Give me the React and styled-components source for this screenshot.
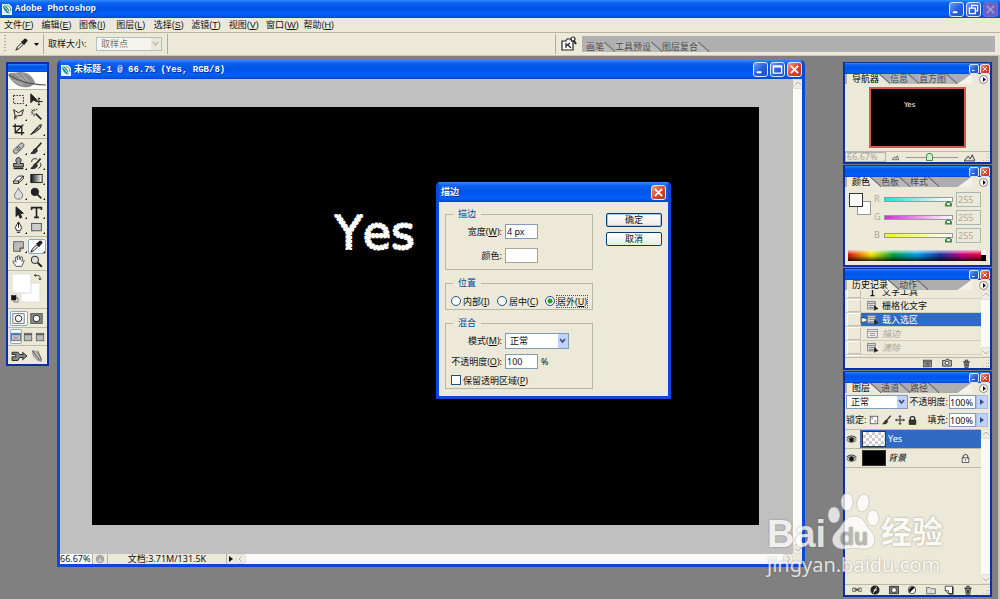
import React from "react";
import styled, { createGlobalStyle, css } from "styled-components";

const FACE = "#ece9d8";
const UI = '"Noto Sans", "Noto Sans CJK SC", sans-serif';
const MENU = '"Liberation Sans", "Noto Sans CJK SC", sans-serif';
const MONO = '"Liberation Mono", "Noto Sans CJK SC", monospace';

const Global = createGlobalStyle`
  *, *::before, *::after { box-sizing: border-box; }
  body { margin: 0; background: #808080; color: #111; font: 9px/12px ${UI}; }
  button, input, select { font: inherit; color: inherit; margin: 0; padding: 0; }
  fieldset { margin: 0; padding: 0; min-width: 0; }
  svg { display: block; flex: none; }
`;

const Page = styled.div`
  min-height: 100vh;
  display: flex;
  flex-direction: column;
`;

/* ---------- shared window chrome ---------- */

const blueBar = css`
  background: linear-gradient(#2f8dff 0, #0a62f0 18%, #0054e6 45%, #0060fc 80%, #0047cf 100%);
  color: #fff;
`;

const AppTitle = styled.header`
  ${blueBar}
  height: 18px;
  flex: none;
  display: flex;
  align-items: center;
  gap: 3px;
  padding: 0 2px;
  font-family: ${MONO};
  font-weight: 700;
`;

const Title = styled.h1`
  flex: 1;
  margin: 0;
  font: inherit;
  white-space: nowrap;
  text-shadow: 1px 1px 0 #0a2f8c;
`;

const Buttons = styled.div`
  display: flex;
  gap: ${(p) => (p.$small ? 1 : 2)}px;
`;

const Caption = styled.button`
  width: ${(p) => p.$size}px;
  height: ${(p) => p.$size}px;
  padding: 0;
  border: 1px solid #dbe6ff;
  border-radius: ${(p) => (p.$size > 12 ? 3 : 2)}px;
  display: grid;
  place-items: center;
  color: #fff;
  background: ${(p) => (p.$close ? "linear-gradient(135deg,#f0a080,#d9492a 50%,#b8361a)" : "linear-gradient(135deg,#6f9cf8,#2c62dc 50%,#1e4fc8)")};
  &:disabled {
    border-color: #6a6fd8;
    color: #a698d8;
    background: #6a5fc4;
  }
`;

const glyphs = {
  min: <path d="M2 9h5" strokeWidth="2" />,
  max: <path d="M1.500 2h9v8h-9zM1.500 3h9" strokeWidth="1.500" />,
  restore: <path d="M4 4V1.500h6.500v6H8M1.500 4.500h6.500v6H1.500z" strokeWidth="1.400" />,
  close: <path d="M2 2l8 8M10 2l-8 8" strokeWidth="1.800" />,
};
function CaptionButton({ kind, size, label, disabled }) {
  return (
    <Caption type="button" $size={size} $close={kind === "close"} aria-label={label} disabled={disabled}>
      <svg width={size - 4} height={size - 4} viewBox="0 0 12 12" fill="none" stroke="currentColor">{glyphs[kind]}</svg>
    </Caption>
  );
}

function PsLogo() {
  return (
    <svg width="10" height="12" viewBox="0 0 10 12">
      <path d="M0 1h7l3 3v8H0z" fill="#e9f4f4" />
      <path d="M1 2c3 0 6 3 7 9C4 10 1 7 1 2z" fill="#1a8a8c" />
      <path d="M1 2c3 3 5 6 7 9" stroke="#d8f2ee" fill="none" />
      <path d="M5 2c2 1 4 3 4 6" stroke="#4b9d50" fill="none" />
    </svg>
  );
}

/* ---------- icons ---------- */

const icons = {
  marquee: <path d="M2 3h12v10H2z" strokeDasharray="2 1.500" />,
  move: <><path d="M1 1v11l3-3h5z" fill="#222" /><path d="M11 6v9M6.500 10.500h9M9.500 7.500L11 6l1.500 1.500M9.500 13.500L11 15l1.500-1.500" /></>,
  lasso: <path d="M3 14l1-4-2-8 6 4 6-4-2 7-8 1c-2 1 0 3 2 2" />,
  wand: <><path d="M7 7l7 7" strokeWidth="2" /><path d="M5 1v3M5 7v3M1 5h3M7 3l2-2M2 2l1.500 1.500M2 8l1.500-1.500" /></>,
  crop: <path d="M4 1v11h11M1 4h11v11M4 12L14 2" strokeWidth="1.600" />,
  slice: <><path d="M1 14L11 3l3-1-1 4-6 5z" fill="#999" /><path d="M1 14l9-8" /></>,
  heal: <><path d="M2 11l8-8c3-2 6 1 4 4l-8 8c-3 1-5-1-4-4z" fill="#bbb" stroke="#555" transform="translate(0 -1)" /><path d="M6 6l4 4M8 5l3 3M5 8l3 3" stroke="#555" /></>,
  brush: <><path d="M14 1L7 9" strokeWidth="2" /><path d="M7 8c-3 0-2 4-6 6 4 1 8-1 8-4z" fill="#333" /></>,
  stamp: <><path d="M6 8c0-2-2-3-1-5 1-3 5-3 6 0 1 2-1 3-1 5h4v4H2V8z" fill="#999" /><path d="M2 14h12" strokeWidth="2" /></>,
  history: <><path d="M13 2L7 9" strokeWidth="2" /><path d="M7 8c-3 0-2 4-6 6 4 1 8-1 8-4z" fill="#333" /><path d="M2 6c0-4 5-5 7-3M12 7c3 2 1 6-2 7" /></>,
  eraser: <><path d="M2 11l6-6h6l-6 6z" fill="#fff" /><path d="M2 11v3h6v-3M8 14l6-6V5" /></>,
  gradient: <rect x="1" y="3" width="14" height="10" fill="url(#toolGradient)" />,
  blur: <path d="M8 1c1 4 5 6 5 9a5 5 0 01-10 0c0-3 4-5 5-9z" fill="#ddd" stroke="#777" />,
  burn: <><circle cx="6" cy="6" r="4.500" fill="#222" /><path d="M9 9l5 5" strokeWidth="2" /></>,
  arrow: <path d="M5 1v12l3-3 2 5 2-1-2-5h4z" fill="#222" />,
  type: <path d="M2 5V2h12v3M8 2v12M5 14h6" strokeWidth="2" />,
  pen: <><path d="M8 1l4 7-2 4H6L4 8zM6 14h4" fill="#fff" /><path d="M8 2v6" /></>,
  shape: <rect x="2" y="3" width="12" height="9" fill="#ccc" stroke="#555" />,
  notes: <><path d="M2 2h12v8l-4 4H2z" fill="#bbb" stroke="#666" /><path d="M14 10h-4v4" fill="#fff" /></>,
  dropper: <><path d="M1 15l2-4 5-5 2 2-5 5z" fill="#eee" /><path d="M8 4l4 4M9 5l3-3c1-1 3 1 2 2l-3 3z" fill="#222" strokeWidth="2" /></>,
  hand: <path d="M5 14L1 8l2-1 2 2-1-6 2-1 1 4V1h2l1 5 1-4 2 1-1 5 2-2 1 1-3 7z" fill="#fff" stroke="#555" />,
  zoom: <><circle cx="6" cy="6" r="4.500" fill="#ddd" /><path d="M9.500 9.500l5 5" strokeWidth="2.400" /></>,
  swap: <path d="M3 2L1 5l3 2M1 5h8c3 0 3 3 3 8M9 11l3 3 3-3" strokeWidth="1.600" />,
  mini: <><rect x="6" y="6" width="8" height="8" fill="#fff" /><rect x="1" y="1" width="9" height="9" fill="#111" /></>,
  standard: <><rect x="1" y="2" width="14" height="12" fill="#fff" stroke="#777" /><circle cx="8" cy="8" r="4" fill="#fff" /></>,
  quick: <><rect x="1" y="2" width="14" height="12" fill="#888" stroke="#555" /><circle cx="8" cy="8" r="4" fill="#fff" /></>,
  screen: <><rect x="1" y="2" width="14" height="12" fill="#b9cbe0" stroke="#456" /><path d="M2 4h12" stroke="#356ac0" strokeWidth="2" /><path d="M4 12l8-5M4 7l8 5" stroke="#c66" /></>,
  full: <><rect x="2" y="2" width="12" height="12" fill="#bbb" stroke="#555" /><path d="M2 4h12" strokeWidth="2" stroke="#555" /></>,
  jump: <path d="M1 3h8l2 3h5l-1-3 6 5-6 5 1-3h-5l-2 4H1V9h5V6H1z" fill="#888" />,
  ready: <><path d="M2 1c6 0 10 5 12 14C7 14 2 9 2 1z" fill="#bbb" stroke="#888" /><path d="M2 1l10 13M9 1l5 12" stroke="#555" /></>,
  browse: <><path d="M1 5h4l1-2h4l1 2h1v9H1z" fill="#fff" /><path d="M5 7v5M5 10l4-3M7 9l3 3" /><circle cx="12" cy="3" r="2" fill="#fff" /><path d="M13 5l2 3" strokeWidth="2" /></>,
  doc: <><rect x="1" y="2" width="11" height="11" fill="#ddd" stroke="#777" /><path d="M1 5h11M3 8h7M3 11h7" stroke="#777" /><path d="M11 8v7l2-2h3z" fill="#222" /></>,
  dialog: <><rect x="1" y="2" width="14" height="12" fill="#eee" stroke="#888" /><path d="M1 5h14M4 8h8M4 11h8" stroke="#888" /></>,
  newDoc: <><rect x="1" y="2" width="14" height="12" fill="#999" stroke="#333" /><path d="M1 5h14M4 8h8M4 11h8" stroke="#333" /></>,
  snapshot: <><path d="M1 4h4l2-2h4l1 2h3v9H1z" fill="#bbb" /><circle cx="8" cy="8" r="3" fill="#fff" /></>,
  trash: <><path d="M4 6h8l-1 9H5z" fill="#aaa" /><path d="M2 5h12M6 4V2h4v2M7 8v5M9 8v5" strokeWidth="1.600" /></>,
  link: <><rect x="0" y="5" width="7" height="5" rx="2" /><rect x="9" y="5" width="7" height="5" rx="2" /><path d="M4 7.500h8" /></>,
  fx: <><circle cx="8" cy="8" r="6.500" fill="#222" /><path d="M5 12c3 0 3-8 6-8M6 8h5" stroke="#fff" strokeWidth="1.600" /></>,
  mask: <><rect x="1" y="2" width="14" height="12" fill="#777" /><circle cx="8" cy="8" r="4" fill="#fff" /></>,
  adjust: <><circle cx="8" cy="8" r="6" fill="#fff" /><path d="M12 4A6 6 0 004 12z" fill="#111" /></>,
  folder: <path d="M1 4h5l2 2h7v8H1z" fill="#ddd" stroke="#555" />,
  page: <><path d="M2 2h12v12H7l-5-5z" fill="#fff" /><path d="M7 14V9H2" /><path d="M14 3v11H8" strokeWidth="2" /></>,
  pixels: <><rect x="2" y="2" width="12" height="12" fill="#fff" stroke="#444" /><path d="M3 3h4v4H3zM8 8h4v4H8z" fill="#bbb" stroke="none" /></>,
  cross: <path d="M8 1v14M1 8h14M6 3l2-2 2 2M6 13l2 2 2-2M3 6L1 8l2 2M13 6l2 2-2 2" strokeWidth="1.500" />,
  lock: <><rect x="2" y="7" width="12" height="8" fill="#333" /><path d="M4 7V4c0-4 8-4 8 0v3" strokeWidth="2" /></>,
  lockOpen: <><rect x="2" y="7" width="12" height="8" fill="#eee" /><path d="M4 7V4c0-4 8-4 8 0v3M8 10v2" strokeWidth="1.600" /></>,
  eye: <><path d="M1 9c4-5 10-5 14 0-4 4-10 4-14 0z" fill="#ccc" stroke="#555" /><circle cx="8" cy="8.500" r="3" fill="#111" /><path d="M1 6c4-4 10-4 14 0" stroke="#444" strokeWidth="1.600" /></>,
  pointer: <path d="M1 4h6c4 0 7 2 7 4s-3 4-7 4H1l3-4z" fill="#fff" />,
  clock: <><circle cx="8" cy="8" r="6" fill="#ccc" stroke="#888" /><path d="M5 5h6v5M5 5v6" stroke="#777" /></>,
  hills: <path d="M0 13L6 6l3 4 3-6 4 9z" fill="#ddd" />,
};
function Icon({ name, size = 12, width }) {
  return (
    <svg width={width || size} height={size} viewBox={width ? "0 0 22 16" : "0 0 16 16"} fill="none" stroke="#222" strokeWidth="1.200">
      {icons[name]}
    </svg>
  );
}

/* ---------- menu and options ---------- */

const MenuBar = styled.nav`
  height: 14px;
  flex: none;
  background: ${FACE};
  padding-left: 4px;
`;
const MenuItems = styled.div`
  width: 337px;
  display: grid;
  grid-template-columns: repeat(9, 1fr);
`;
const MenuItem = styled.button`
  border: 0;
  background: none;
  text-align: left;
  white-space: nowrap;
  font: 9px/14px ${MENU};
`;

const OptionsBar = styled.div`
  height: 24px;
  flex: none;
  display: flex;
  align-items: center;
  background: ${FACE};
  border-top: 1px solid #b8b5a5;
  border-bottom: 1px solid #c9c6b6;
  padding: 0 5px 0 4px;
`;
const Gripper = styled.span`
  width: 2px;
  height: 18px;
  background: repeating-linear-gradient(#aaa 0 1px, transparent 1px 3px);
`;
const Divider = styled.span`
  width: 1px;
  align-self: stretch;
  margin: 1px 0;
  background: #b0ad9d;
`;
const ToolPick = styled.button`
  border: 0;
  background: none;
  width: 37px;
  display: flex;
  align-items: center;
  justify-content: center;
  gap: 6px;
  padding-left: 5px;
`;
const SampleLabel = styled.label`
  width: 52px;
  padding-left: 4px;
  white-space: nowrap;
`;
const SampleEnd = styled.span`
  flex: 1;
  align-self: stretch;
  margin: 1px 0 1px 5px;
  border-left: 1px solid #b0ad9d;
`;
const Well = styled.div`
  width: 413px;
  height: 16px;
  display: flex;
  align-items: flex-end;
  background: #b0b0b0;
  padding-left: 4px;
`;
const BrowseButton = styled.button`
  border: 0;
  background: none;
  width: 26px;
  display: grid;
  place-items: center;
`;

/* ---------- form controls ---------- */

const SelectBox = styled.span`
  position: relative;
  display: flex;
  width: ${(p) => p.$w}px;
  height: ${(p) => p.$h}px;
  opacity: ${(p) => (p.$off ? 0.55 : 1)};
  select {
    flex: 1;
    min-width: 0;
    appearance: none;
    border: 1px solid #7f9db9;
    border-radius: 0;
    background: #fff;
    padding-left: 4px;
    opacity: 1;
  }
  &::after {
    content: "";
    position: absolute;
    right: 1px;
    top: 1px;
    bottom: 1px;
    width: 10px;
    pointer-events: none;
    background: ${(p) => (p.$off ? "#e8e6dc" : "#c1d2fa")};
  }
  svg {
    position: absolute;
    z-index: 1;
    right: 3px;
    top: calc(50% - 3px);
    pointer-events: none;
  }
`;
function Select({ id, value, w, h, disabled, label }) {
  return (
    <SelectBox $w={w} $h={h} $off={disabled}>
      <select id={id} aria-label={label} disabled={disabled} defaultValue={value}>
        <option>{value}</option>
      </select>
      <svg width="7" height="6" viewBox="0 0 7 6" fill="none" stroke={disabled ? "#999" : "#2f4c8c"} strokeWidth="1.600"><path d="M1 1l2.500 3L6 1" /></svg>
    </SelectBox>
  );
}
const TextBox = styled.input`
  width: ${(p) => p.$w}px;
  height: ${(p) => p.$h || 15}px;
  border: 1px solid #7f9db9;
  background: ${(p) => (p.$flat ? FACE : "#fff")};
  padding-left: ${(p) => (p.$tight ? 0 : 1)}px;
  &:disabled { color: #aca899; border-color: #a9b6b4; }
`;

/* ---------- workspace ---------- */

const Workspace = styled.main`
  position: relative;
  flex: 1;
  display: flex;
  align-items: flex-start;
  background: #808080;
  border-right: 2px solid #c9c7bd;
  padding: 4px 6px 2px 6px;
`;

const Toolbox = styled.aside`
  width: 43px;
  flex: none;
  margin-top: 2px;
  background: ${FACE};
  border: 2px solid #0a2fa8;
`;
const ToolTitle = styled.div`
  ${blueBar}
  height: 8px;
`;
const Feather = styled.div`
  height: 17px;
  background: #fff;
`;
const ToolGroup = styled.div`
  display: grid;
  grid-template-columns: 18px 18px;
  justify-content: center;
  padding: 2px 0 1px;
  border-top: 1px solid #bdb9a8;
`;
const Tool = styled.button`
  position: relative;
  height: 15px;
  border: 1px solid ${(p) => (p.$on ? "#8aa9c4" : "transparent")};
  border-radius: 2px;
  background: ${(p) => (p.$on ? "#fff" : "none")};
  display: grid;
  place-items: center;
  &::after {
    content: "";
    display: ${(p) => (p.$more ? "block" : "none")};
    position: absolute;
    right: 0;
    bottom: 0;
    border: 1px solid #111;
    border-left-color: transparent;
    border-top-color: transparent;
  }
`;
const Swatches = styled.div`
  height: 38px;
  padding: 2px 3px;
  border-top: 1px solid #bdb9a8;
`;
const ScreenGroup = styled.div`
  display: grid;
  grid-template-columns: repeat(3, 12px);
  justify-content: center;
  padding: 1px 0;
  border-top: 1px solid #bdb9a8;
`;

const groups = [
  ["marquee+", "move", "lasso+", "wand", "crop", "slice+"],
  ["heal+", "brush+", "stamp+", "history+", "eraser+", "gradient+", "blur+", "burn+"],
  ["arrow+", "type+", "pen+", "shape+"],
  ["notes+", "dropper+", "hand", "zoom"],
];

function Tools() {
  return (
    <Toolbox aria-label="工具">
      <ToolTitle />
      <Feather>
        <svg width="39" height="17" viewBox="0 0 39 17">
          <defs><linearGradient id="toolGradient"><stop stopColor="#111" /><stop offset="1" stopColor="#fff" /></linearGradient></defs>
          <path d="M0 2c4-2 8-1 12-2 8 0 12 4 15 10-1 4-6 6-12 5C8 14 2 8 0 2z" fill="#8f8f8f" />
          <path d="M3 4l12 7M7 1l12 10M13 1l9 10M5 8l10 5" stroke="#c8c8c8" strokeWidth=".8" />
          <path d="M1 3c9 6 18 9 37 10" stroke="#555" strokeWidth="1.200" fill="none" />
        </svg>
      </Feather>
      {groups.map((g) => (
        <ToolGroup key={g[0]}>
          {g.map((t) => {
            const name = t.replace("+", "");
            return <Tool key={t} $more={t.endsWith("+")} $on={name === "dropper"} aria-label={name}><Icon name={name} size={13} /></Tool>;
          })}
        </ToolGroup>
      ))}
      <Swatches>
        <svg width="33" height="34" viewBox="0 0 33 34">
          <rect x="10" y="10" width="19" height="19" fill="#fff" stroke="#ddd" />
          <rect x="1" y="1" width="19" height="19" fill="#fff" stroke="#ddd" />
          <g fill="none" stroke="#222" strokeWidth="1.200">
            <g transform="translate(23 0) scale(.5)">{icons.swap}</g>
            <g transform="translate(0 22) scale(.5)">{icons.mini}</g>
          </g>
        </svg>
      </Swatches>
      <ToolGroup>
        <Tool $on aria-label="standard mode"><Icon name="standard" size={13} /></Tool>
        <Tool aria-label="quick mask"><Icon name="quick" size={13} /></Tool>
      </ToolGroup>
      <ScreenGroup>
        <Tool $on aria-label="standard screen"><Icon name="screen" size={10} /></Tool>
        <Tool aria-label="full screen with menu"><Icon name="full" size={10} /></Tool>
        <Tool aria-label="full screen"><Icon name="full" size={10} /></Tool>
      </ScreenGroup>
      <ToolGroup>
        <Tool aria-label="jump"><Icon name="jump" size={12} width={17} /></Tool>
        <Tool aria-label="ready"><Icon name="ready" /></Tool>
      </ToolGroup>
    </Toolbox>
  );
}

/* ---------- document window ---------- */

const DocWindow = styled.section`
  flex: 1;
  align-self: stretch;
  min-width: 0;
  display: flex;
  flex-direction: column;
  margin: 0 38px 30px 8px;
  border: 3px solid #0a48dc;
  border-top: 0;
  border-radius: 5px 5px 0 0;
  overflow: hidden;
`;
const DocTitle = styled.div`
  ${blueBar}
  height: 19px;
  display: flex;
  align-items: center;
  gap: 3px;
  padding-left: 1px;
  font-family: ${MONO};
  font-weight: 700;
`;
const DocBody = styled.div`
  flex: 1;
  display: flex;
`;
const Mat = styled.div`
  flex: 1;
  background: #c0c0c0;
  padding: 28px 34px 29px 32px;
`;
const Canvas = styled.div`
  background: #000;
  height: 100%;
  svg { width: 100%; height: 100%; }
`;
const Letters = styled.text`
  font: 46px "DejaVu Sans", sans-serif;
  font-kerning: none;
  fill: #fff;
  stroke: #fff;
  stroke-width: 2px;
  stroke-dasharray: 3 1;
`;
const VScroll = styled.div`
  width: 9px;
  flex: none;
  display: flex;
  flex-direction: column;
  justify-content: space-between;
  background: #fbfaf6;
`;
const HScroll = styled.div`
  flex: 1;
  display: flex;
  justify-content: space-between;
  background: #fbfaf6;
`;
const ScrollButton = styled.button`
  width: 10px;
  height: 10px;
  border: 1px solid #e0ddd0;
  border-radius: 2px;
  background: #f0eee4;
  display: grid;
  place-items: center;
  svg { transform: rotate(${(p) => p.$turn}deg); }
`;
const Scroll = ({ turn, label }) => (
  <ScrollButton $turn={turn} aria-label={label}>
    <svg width="6" height="6" viewBox="0 0 6 6" fill="none" stroke="#b5b2a4"><path d="M0 4l3-3 3 3" /></svg>
  </ScrollButton>
);
const Status = styled.footer`
  height: 10px;
  display: flex;
  align-items: center;
  background: ${FACE};
  line-height: 10px;
`;
const Percent = styled.input`
  width: 32px;
  height: 10px;
  border: 0;
  background: #fff;
`;
const StatusIcon = styled.span`
  width: 16px;
  display: grid;
  place-items: center;
  border-right: 1px solid #b5b2a4;
  border-left: 1px solid #b5b2a4;
`;
const Size = styled.span`
  width: 118px;
  text-align: center;
  white-space: nowrap;
`;
const More = styled.button`
  width: 10px;
  height: 10px;
  border: 0;
  border-left: 1px solid #b5b2a4;
  background: none;
  display: grid;
  place-items: center;
`;
const Corner = styled.span`
  width: 9px;
`;
const RightTriangle = ({ color = "#111" }) => <svg width="5" height="6" viewBox="0 0 5 6"><path d="M0 0l4 3-4 3z" fill={color} /></svg>;

function DocumentWindow() {
  return (
    <DocWindow>
      <DocTitle>
        <PsLogo />
        <Title as="h2">未标题-1 @ 66.7% (Yes, RGB/8)</Title>
        <Buttons>
          <CaptionButton kind="min" size={15} label="最小化" />
          <CaptionButton kind="max" size={15} label="最大化" />
          <CaptionButton kind="close" size={15} label="关闭" />
        </Buttons>
      </DocTitle>
      <DocBody>
        <Mat>
          <Canvas>
            <svg viewBox="0 0 668 418">
              <Letters x="243" y="142">Yes</Letters>
            </svg>
          </Canvas>
        </Mat>
        <VScroll><Scroll turn={0} label="向上" /><Scroll turn={180} label="向下" /></VScroll>
      </DocBody>
      <Status>
        <Percent defaultValue="66.67%" aria-label="缩放" />
        <StatusIcon><Icon name="clock" size={10} /></StatusIcon>
        <Size>文档:3.71M/131.5K</Size>
        <More aria-label="更多"><RightTriangle /></More>
        <HScroll><Scroll turn={270} label="向左" /><Scroll turn={90} label="向右" /></HScroll>
        <Corner />
      </Status>
    </DocWindow>
  );
}

/* ---------- palettes ---------- */

const Palettes = styled.aside`
  width: 149px;
  flex: none;
  align-self: stretch;
  margin-top: 2px;
  display: flex;
  flex-direction: column;
  gap: 1px;
`;
const PaletteFrame = styled.section`
  display: flex;
  flex-direction: column;
  flex: ${(p) => (p.$grow ? "1" : "none")};
  height: ${(p) => (p.$grow ? "auto" : "102px")};
  background: ${FACE};
  border: 2px solid #0a2fa8;
  border-top-width: 1px;
`;
const PaletteTitle = styled.div`
  ${blueBar}
  height: 11px;
  flex: none;
  display: flex;
  justify-content: flex-end;
  align-items: center;
`;
const Tabs = styled.div`
  height: 10px;
  flex: none;
  display: flex;
  background: #adadad;
  padding-left: 2px;
`;
const Tab = styled.button`
  display: flex;
  height: 10px;
  border: 0;
  padding: 0 0 0 ${(p) => (p.$on ? 5 : 0)}px;
  line-height: 10px;
  white-space: nowrap;
  color: ${(p) => (p.$on ? "#000" : "#4a4a4a")};
  background: linear-gradient(${(p) => (p.$on ? FACE : "#b9b9b9")} 0 0) left / calc(100% - 11px) 100% no-repeat;
  &::after {
    content: "";
    width: 11px;
    height: 10px;
    background: linear-gradient(to top right, ${(p) => (p.$on ? FACE : "#b9b9b9")} 46%, #666 50%, transparent 60%);
  }
`;
const TabEnd = styled.div`
  width: 32px;
  margin-left: auto;
  display: flex;
  justify-content: flex-end;
  align-items: center;
  padding-right: 2px;
  background: linear-gradient(to bottom right, transparent 46%, #f4f2e6 50%) left / 14px 100% no-repeat,
    linear-gradient(${FACE} 0 0) right / 18px 100% no-repeat;
`;
const RoundMenu = styled.button`
  width: 9px;
  height: 9px;
  border: 1px solid #888;
  border-radius: 50%;
  background: #fff;
  display: grid;
  place-items: center;
`;

function Palette({ tabs, grow, children }) {
  return (
    <PaletteFrame $grow={grow}>
      <PaletteTitle>
        <Buttons $small>
          <CaptionButton kind="min" size={10} label="最小化" />
          <CaptionButton kind="close" size={10} label="关闭" />
        </Buttons>
      </PaletteTitle>
      <Tabs>
        {tabs.map((t, i) => <Tab key={t} $on={i === 0}>{t}</Tab>)}
        <TabEnd><RoundMenu aria-label="菜单"><svg width="4" height="5" viewBox="0 0 4 5"><path d="M1 0l3 2.500L1 5z" fill="#111" /></svg></RoundMenu></TabEnd>
      </Tabs>
      {children}
    </PaletteFrame>
  );
}

const PaletteFooter = styled.div`
  height: 11px;
  flex: none;
  display: flex;
  align-items: center;
  justify-content: ${(p) => (p.$spread ? "space-between" : "flex-end")};
  gap: ${(p) => (p.$spread ? 0 : 10)}px;
  padding-left: ${(p) => p.$pad || 0}px;
  border-top: 1px solid #bdb9a8;
`;
const FlatButton = styled.button`
  border: 0;
  background: none;
  display: grid;
  place-items: center;
`;
const Grip = () => (
  <svg width="9" height="9" viewBox="0 0 9 9" fill="#bdb9a8"><path d="M7 1h1v1H7zM5 4h1v1H5zM7 4h1v1H7zM2 7h1v1H2zM5 7h1v1H5zM7 7h1v1H7z" /></svg>
);

const NavView = styled.div`
  flex: 1;
  display: grid;
  place-items: center;
`;
const NavThumb = styled.div`
  width: 97px;
  height: 61px;
  border: 2px solid #d45a50;
  background: #000;
  color: #fff;
  padding: 10px 0 0 33px;
  font: 7px/12px "DejaVu Sans", sans-serif;
`;
const range = css`
  appearance: none;
  margin: 0;
  min-width: 0;
  height: 12px;
  background: none;
`;
const ZoomRange = styled.input`
  ${range}
  width: 52px;
  &::-webkit-slider-runnable-track { height: 1px; background: #999; }
  &::-webkit-slider-thumb {
    appearance: none;
    width: 7px;
    height: 8px;
    margin-top: -4px;
    background: #d6ecd0;
    border: 1px solid #4a8c52;
    border-radius: 3px 3px 0 0;
  }
`;

function Navigator() {
  return (
    <Palette tabs={["导航器", "信息", "直方图"]}>
      <NavView><NavThumb>Yes</NavThumb></NavView>
      <PaletteFooter $spread>
        <TextBox $w={41} $h={10} $flat disabled defaultValue="66.67%" aria-label="缩放" />
        <Icon name="hills" size={7} />
        <ZoomRange type="range" defaultValue="46" aria-label="缩放" />
        <Icon name="hills" size={11} />
        <Grip />
      </PaletteFooter>
    </Palette>
  );
}

const ColorBody = styled.div`
  flex: 1;
  display: flex;
  gap: 3px;
  padding: 4px 9px 0 3px;
`;
const ColorRows = styled.div`
  flex: 1;
  display: flex;
  flex-direction: column;
  gap: 2px;
`;
const ColorRow = styled.div`
  display: grid;
  grid-template-columns: 7px 1fr 25px;
  gap: 3px;
  align-items: center;
  height: 16px;
  color: #aca899;
`;
const ColorRange = styled.input`
  ${range}
  width: 100%;
  &::-webkit-slider-runnable-track {
    height: 5px;
    border: 1px solid #999;
    background: linear-gradient(to right, ${(p) => p.$from}, #fff);
  }
  &::-webkit-slider-thumb {
    appearance: none;
    width: 7px;
    height: 6px;
    margin-top: 3px;
    background: linear-gradient(#eaf6e6 0 0) center / 3px 2px no-repeat, #3f8a4c;
    clip-path: polygon(50% 0, 100% 50%, 100% 100%, 0 100%, 0 50%);
  }
`;
const Spectrum = styled.div`
  height: 11px;
  margin: 0 4px 4px 3px;
  flex: none;
  background:
    linear-gradient(#fff 50%, #000 50%) right / 5px 100% no-repeat,
    linear-gradient(rgba(255,255,255,.75), transparent 40%, rgba(0,0,0,.1) 55%, rgba(0,0,0,.8)),
    linear-gradient(to right, #e01010, #f5e600 17%, #00a040 33%, #00a0e8 50%, #1a2f9c 67%, #d0007c 83%, #e01020);
`;

function Color() {
  return (
    <Palette tabs={["颜色", "色板", "样式"]}>
      <ColorBody>
        <svg width="23" height="27" viewBox="0 0 23 27">
          <rect x="9.500" y="10.500" width="13" height="13" fill="#fff" stroke="#999" />
          <rect x="1.500" y="2.500" width="13" height="13" fill="#fff" stroke="#333" />
        </svg>
        <ColorRows>
          {[["R", "#2adada"], ["G", "#d92ad9"], ["B", "#f0f030"]].map(([c, from]) => (
            <ColorRow key={c}>
              <label htmlFor={"channel" + c}>{c}</label>
              <ColorRange id={"channel" + c} type="range" max="255" defaultValue="255" $from={from} />
              <TextBox $w={25} $flat disabled defaultValue="255" aria-label={c + " 值"} />
            </ColorRow>
          ))}
        </ColorRows>
      </ColorBody>
      <Spectrum />
    </Palette>
  );
}

const ListArea = styled.div`
  flex: 1;
  min-height: 0;
  display: flex;
  overflow: hidden;
`;
const HistoryList = styled.ul`
  flex: 1;
  margin: -5px 0 0;
  padding: 0;
  list-style: none;
`;
const HistoryRow = styled.li`
  height: 14px;
  display: grid;
  grid-template-columns: 16px 4px 14px 1fr;
  align-items: center;
  column-gap: 1px;
  white-space: nowrap;
  border-bottom: 1px solid #d2cfbf;
  color: ${(p) => (p.$off ? "#a8a598" : p.$on ? "#fff" : "#111")};
  font-style: ${(p) => (p.$off ? "italic" : "normal")};
  background: linear-gradient(to right, ${FACE} 16px, ${(p) => (p.$on ? "#316ac5" : FACE)} 16px);
`;
const Slot = styled.span`
  height: 13px;
  margin-left: 2px;
  border: 1px solid #c4c1b1;
  border-top-color: #fff;
  border-left-color: #fff;
`;
const Pointer = styled.span`
  width: 8px;
  margin-left: -2px;
`;

function History() {
  const rows = [["文字工具", "type"], ["栅格化文字", "doc"], ["载入选区", "doc", "on"], ["描边", "dialog", "off"], ["清除", "doc", "off"], ["取消选择", "doc", "off"]];
  return (
    <Palette tabs={["历史记录", "动作"]}>
      <ListArea>
        <HistoryList>
          {rows.map(([text, icon, state]) => (
            <HistoryRow key={text} $on={state === "on"} $off={state === "off"}>
              <Slot />
              <Pointer>{state === "on" && <Icon name="pointer" size={8} />}</Pointer>
              <Icon name={icon} size={11} />
              <span>{text}</span>
            </HistoryRow>
          ))}
        </HistoryList>
        <VScroll><Scroll turn={0} label="向上" /><Scroll turn={180} label="向下" /></VScroll>
      </ListArea>
      <PaletteFooter>
        <FlatButton aria-label="新文档"><Icon name="newDoc" size={9} /></FlatButton>
        <FlatButton aria-label="快照"><Icon name="snapshot" size={10} /></FlatButton>
        <FlatButton aria-label="删除"><Icon name="trash" size={9} /></FlatButton>
        <Grip />
      </PaletteFooter>
    </Palette>
  );
}

const LayerOptions = styled.div`
  flex: none;
  display: flex;
  align-items: center;
  justify-content: space-between;
  height: 18px;
  padding: 0 2px 0 1px;
  white-space: nowrap;
`;
const LockIcons = styled.span`
  display: flex;
  align-items: center;
  gap: 3px;
`;
const Value = styled.span`
  display: flex;
  align-items: center;
  gap: 1px;
`;
const ValueField = styled.span`
  display: flex;
`;
const Arrow = styled.button`
  width: 12px;
  height: 14px;
  border: 1px solid #a9bbe0;
  background: #c1d2fa;
  display: grid;
  place-items: center;
`;
function Amount({ id, label }) {
  return (
    <Value>
      <label htmlFor={id}>{label}</label>
      <ValueField>
        <TextBox id={id} $w={27} $h={14} $tight defaultValue="100%" />
        <Arrow aria-label={label}><RightTriangle color="#2f4c8c" /></Arrow>
      </ValueField>
    </Value>
  );
}
const LayerList = styled.ul`
  flex: 1;
  margin: 0;
  padding: 0;
  list-style: none;
  border-top: 1px solid #bdb9a8;
`;
const LayerRow = styled.li`
  height: 19px;
  display: grid;
  grid-template-columns: 14px 24px 1fr 20px;
  align-items: center;
  column-gap: 2px;
  padding-left: 1px;
  border-bottom: 1px solid #bdb9a8;
  color: ${(p) => (p.$on ? "#fff" : "#111")};
  font-style: ${(p) => (p.$on ? "normal" : "italic")};
  background: linear-gradient(to right, ${FACE} 15px, ${(p) => (p.$on ? "#316ac5" : FACE)} 15px);
`;
const Thumb = styled.span`
  height: 16px;
  border: 1px solid #333;
  background: ${(p) => (p.$empty ? "repeating-conic-gradient(#ccc 0 25%, #fff 0 50%) 0 0 / 6px 6px" : "#000")};
`;

function Layers() {
  return (
    <Palette grow tabs={["图层", "通道", "路径"]}>
      <LayerOptions>
        <Select w={62} h={14} value="正常" label="混合模式" />
        <Amount id="layerOpacity" label="不透明度:" />
      </LayerOptions>
      <LayerOptions>
        <LockIcons>锁定:<Icon name="pixels" size={10} /><Icon name="brush" size={10} /><Icon name="cross" size={10} /><Icon name="lock" size={9} /></LockIcons>
        <Amount id="layerFill" label="填充:" />
      </LayerOptions>
      <ListArea>
        <LayerList>
          <LayerRow $on><Icon name="eye" size={11} /><Thumb $empty /><span>Yes</span></LayerRow>
          <LayerRow><Icon name="eye" size={11} /><Thumb /><span>背景</span><Icon name="lockOpen" size={9} /></LayerRow>
        </LayerList>
        <VScroll><Scroll turn={0} label="向上" /><Scroll turn={180} label="向下" /></VScroll>
      </ListArea>
      <PaletteFooter $spread $pad={7}>
        {["link", "fx", "mask", "adjust", "folder", "page", "trash"].map((n) => (
          <FlatButton key={n} aria-label={n}><Icon name={n} size={10} /></FlatButton>
        ))}
        <Grip />
      </PaletteFooter>
    </Palette>
  );
}

/* ---------- stroke dialog ---------- */

const DialogFrame = styled.form`
  position: absolute;
  left: 436px;
  top: 126px;
  width: 235px;
  border: 3px solid #0a48dc;
  border-top: 0;
  border-radius: 4px 4px 0 0;
  background: ${FACE};
`;
const DialogTitle = styled.div`
  ${blueBar}
  height: 20px;
  display: flex;
  align-items: center;
  padding: 0 2px;
  font-weight: 700;
`;
const DialogBody = styled.div`
  display: flex;
  gap: 13px;
  padding: 6px 6px 7px;
`;
const Groups = styled.div`
  flex: 1;
  display: flex;
  flex-direction: column;
  gap: 7px;
`;
const Group = styled.fieldset`
  border: 1px solid #b5b8a8;
  legend {
    height: 12px;
    margin-left: 7px;
    padding: 0 5px;
    color: #0046a5;
  }
`;
const Fields = styled.div`
  display: grid;
  grid-template-columns: 56px auto 1fr;
  column-gap: 3px;
  row-gap: ${(p) => p.$gap}px;
  align-items: center;
  padding: 4px 0 ${(p) => p.$bottom}px;
  label { white-space: nowrap; justify-self: end; }
`;
const Wide = styled.span`
  grid-column: 2 / 4;
`;
const ColorWell = styled.button`
  width: 33px;
  height: 15px;
  border: 1px solid #a5a896;
  background: #fff;
  display: block;
`;
const Radios = styled.div`
  display: grid;
  grid-template-columns: 46px 48px 1fr;
  padding: 6px 0 2px 5px;
`;
const Choice = styled.label`
  display: flex;
  align-items: center;
  gap: 2px;
  height: 12px;
  white-space: nowrap;
  span { outline: ${(p) => (p.$focus ? "1px dotted #555" : "none")}; line-height: 11px; }
`;
const Radio = styled.input`
  appearance: none;
  flex: none;
  width: 10px;
  height: 10px;
  border: 1px solid #1c5180;
  border-radius: 50%;
  background: #fff;
  &:checked { background: radial-gradient(#21a121 0 2px, #fff 3px); }
`;
const Check = styled(Radio)`
  border-radius: 0;
`;
const CheckRow = styled.div`
  padding: 0 0 2px 5px;
`;
const Actions = styled.div`
  width: 56px;
  display: flex;
  flex-direction: column;
  gap: 5px;
  padding-top: 5px;
`;
const Push = styled.button`
  height: 14px;
  line-height: 10px;
  border: 1px solid #003c74;
  border-radius: 2px;
  background: linear-gradient(#fff, #ecebe5);
  box-shadow: ${(p) => (p.$main ? "inset 0 0 0 1px #a9c4f0" : "none")};
`;

function StrokeDialog() {
  return (
    <DialogFrame onSubmit={(e) => e.preventDefault()}>
      <DialogTitle>
        <Title as="h2">描边</Title>
        <CaptionButton kind="close" size={15} label="关闭" />
      </DialogTitle>
      <DialogBody>
        <Groups>
          <Group>
            <legend>描边</legend>
            <Fields $gap={9} $bottom={6}>
              <label htmlFor="strokeWidth">宽度(<u>W</u>):</label>
              <Wide><TextBox id="strokeWidth" $w={33} defaultValue="4 px" /></Wide>
              <label htmlFor="strokeColor">颜色:</label>
              <Wide><ColorWell id="strokeColor" type="button" /></Wide>
            </Fields>
          </Group>
          <Group>
            <legend>位置</legend>
            <Radios>
              <Choice><Radio type="radio" name="place" /><span>内部(<u>I</u>)</span></Choice>
              <Choice><Radio type="radio" name="place" /><span>居中(<u>C</u>)</span></Choice>
              <Choice $focus><Radio type="radio" name="place" defaultChecked /><span>居外(<u>U</u>)</span></Choice>
            </Radios>
          </Group>
          <Group>
            <legend>混合</legend>
            <Fields $gap={5} $bottom={5}>
              <label htmlFor="blendMode">模式(<u>M</u>):</label>
              <Wide><Select id="blendMode" w={64} h={16} value="正常" /></Wide>
              <label htmlFor="blendOpacity">不透明度(<u>O</u>):</label>
              <TextBox id="blendOpacity" $w={33} defaultValue="100" />
              <span>%</span>
            </Fields>
            <CheckRow><Choice><Check type="checkbox" /><span>保留透明区域(<u>P</u>)</span></Choice></CheckRow>
          </Group>
        </Groups>
        <Actions>
          <Push $main type="submit">确定</Push>
          <Push type="button">取消</Push>
        </Actions>
      </DialogBody>
    </DialogFrame>
  );
}

/* ---------- watermark ---------- */

const Mark = styled.div`
  position: absolute;
  right: 52px;
  bottom: 22px;
  width: 179px;
  color: #fff;
  opacity: 0.76;
  pointer-events: none;
  text-shadow: 0 0 2px rgba(90, 90, 80, 0.8);
`;
const MarkRow = styled.div`
  display: flex;
  align-items: flex-end;
  white-space: nowrap;
`;
const MarkLatin = styled.span`
  width: 60px;
  font: 700 38px/38px "Liberation Sans", sans-serif;
`;
const MarkHan = styled.span`
  font: 700 31px/46px "Noto Sans CJK SC", sans-serif;
`;
const MarkUrl = styled.div`
  font: 20px/24px ${UI};
`;

function Watermark() {
  return (
    <Mark>
      <MarkRow>
        <MarkLatin>Bai</MarkLatin>
        <svg width="54" height="62" viewBox="0 0 54 62" fill="#fff" stroke="#aaa" strokeWidth=".6">
          <ellipse cx="7" cy="24" rx="6" ry="8" /><ellipse cx="20" cy="11" rx="6" ry="9" /><ellipse cx="36" cy="12" rx="6" ry="9" transform="rotate(12 36 12)" /><ellipse cx="46" cy="27" rx="6" ry="8" />
          <path d="M27 25c10 0 11 9 17 15 8 9 2 19-8 18-6-1-12-1-18 0C7 59 1 49 9 41c7-6 8-16 18-16z" />
          <text x="13" y="54" fontFamily="Liberation Sans, sans-serif" fontWeight="700" fontSize="23" fill="#a9a9a4" stroke="none">du</text>
        </svg>
        <MarkHan>经验</MarkHan>
      </MarkRow>
      <MarkUrl>jingyan.baidu.com</MarkUrl>
    </Mark>
  );
}

const menus = [["文件", "F"], ["编辑", "E"], ["图像", "I"], ["图层", "L"], ["选择", "S"], ["滤镜", "T"], ["视图", "V"], ["窗口", "W"], ["帮助", "H"]];

export default function App() {
  return (
    <Page>
      <Global />
      <AppTitle>
        <PsLogo />
        <Title>Adobe Photoshop</Title>
        <Buttons>
          <CaptionButton kind="min" size={15} label="最小化" />
          <CaptionButton kind="restore" size={15} label="还原" />
          <CaptionButton kind="close" size={15} label="关闭" disabled />
        </Buttons>
      </AppTitle>
      <MenuBar>
        <MenuItems>
          {menus.map(([name, key]) => <MenuItem key={key}>{name}(<u>{key}</u>)</MenuItem>)}
        </MenuItems>
      </MenuBar>
      <OptionsBar>
        <Gripper />
        <ToolPick aria-label="吸管工具"><Icon name="dropper" size={13} /><svg width="5" height="3" viewBox="0 0 5 3"><path d="M0 0h5L2.500 3z" /></svg></ToolPick>
        <Divider />
        <SampleLabel htmlFor="sample">取样大小:</SampleLabel>
        <Select id="sample" w={66} h={14} value="取样点" disabled />
        <SampleEnd />
        <Divider />
        <BrowseButton aria-label="浏览"><Icon name="browse" size={16} /></BrowseButton>
        <Well>
          {["画笔", "工具预设", "图层复合"].map((t) => <Tab key={t}>{t}</Tab>)}
        </Well>
      </OptionsBar>
      <Workspace>
        <Tools />
        <DocumentWindow />
        <Palettes>
          <Navigator />
          <Color />
          <History />
          <Layers />
        </Palettes>
        <StrokeDialog />
        <Watermark />
      </Workspace>
    </Page>
  );
}
